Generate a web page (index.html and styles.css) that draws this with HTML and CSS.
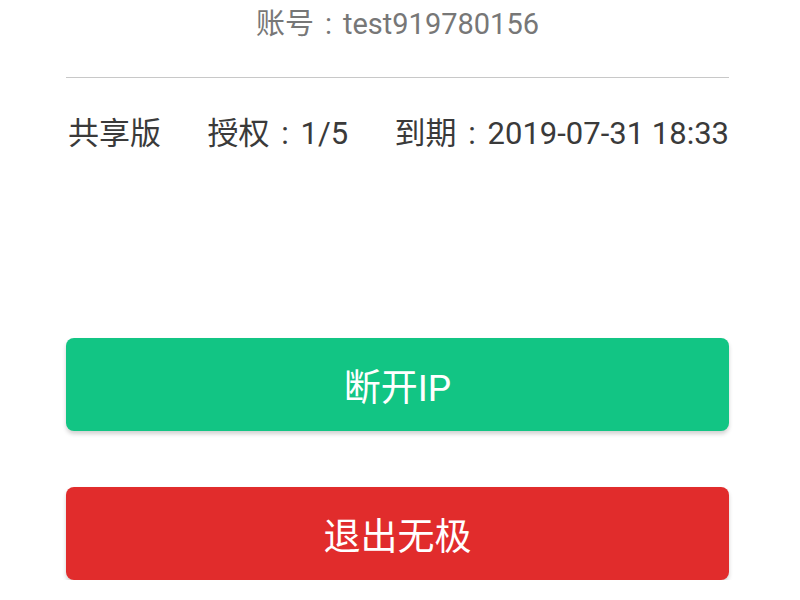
FILE: index.html
```html
<!DOCTYPE html>
<html lang="zh-CN">
<head>
<meta charset="utf-8">
<title>账号</title>
<link rel="stylesheet" href="styles.css">
</head>
<body>
<div class="page">
  <div class="account">账号<span class="colon">:</span>test919780156</div>
  <div class="divider"></div>
  <div class="info">
    <span>共享版</span>
    <span>授权<span class="colon">:</span>1/5</span>
    <span>到期<span class="colon">:</span>2019-07-31 18:33</span>
  </div>
  <button class="btn btn-green">断开IP</button>
  <button class="btn btn-red">退出无极</button>
</div>
</body>
</html>
```
FILE: styles.css
```css
html, body {
  margin: 0;
  padding: 0;
  background: #ffffff;
}
body {
  font-family: Roboto, "Noto Sans CJK SC", sans-serif;
}
.page {
  width: 663px;
  margin: 0 auto 0 66px;
  display: flex;
  flex-direction: column;
}
.colon {
  display: inline-block;
  width: 1em;
  text-align: center;
}
.account {
  text-align: center;
  font-size: 29px;
  line-height: 48px;
  height: 48px;
  color: #777777;
}
.divider {
  margin-top: 29px;
  height: 1px;
  background: #c8c8c8;
}
.info {
  margin-top: 36px;
  height: 40px;
  display: flex;
  justify-content: space-between;
  padding: 0 0 0 2px;
  font-size: 31px;
  line-height: 40px;
  color: #3a3a3a;
}
.btn {
  display: block;
  width: 100%;
  height: 93px;
  border: none;
  border-radius: 8px;
  font-family: Roboto, "Noto Sans CJK SC", sans-serif;
  font-size: 37px;
  font-weight: 400;
  color: #ffffff;
  padding: 0;
  box-shadow: 0 3px 4px rgba(0, 0, 0, 0.18);
}
.btn-green {
  margin-top: 184px;
  background: #12c584;
}
.btn-red {
  margin-top: 56px;
  background: #e12c2c;
}
```
